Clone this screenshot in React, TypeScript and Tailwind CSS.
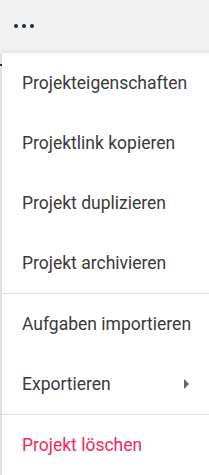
const groups: { label: string; danger?: boolean; sub?: boolean }[][] = [
  [
    { label: 'Projekteigenschaften' },
    { label: 'Projektlink kopieren' },
    { label: 'Projekt duplizieren' },
    { label: 'Projekt archivieren' },
  ],
  [{ label: 'Aufgaben importieren' }, { label: 'Exportieren', sub: true }],
  [{ label: 'Projekt löschen', danger: true }],
];

export default function App() {
  return (
    <div className="w-[209px] h-[475px] overflow-hidden bg-[#f2f2f2] relative font-['Roboto',sans-serif]">
      {/* top bar */}
      <div className="h-[53px] flex items-center pl-[14px] gap-[4px] pb-[1px]">
        <span className="w-[4px] h-[4px] rounded-full bg-[#1c2c3c]" />
        <span className="w-[4px] h-[4px] rounded-full bg-[#1c2c3c]" />
        <span className="w-[4px] h-[4px] rounded-full bg-[#1c2c3c]" />
      </div>
      <div className="absolute left-0 top-[64px] w-[3px] h-[2px] bg-[#2a3a4a]" />

      {/* menu */}
      <div className="absolute left-[2px] top-[53px] w-[240px] bg-white shadow-[0_1px_5px_rgba(0,0,0,0.22)]">
        {groups.map((g, gi) => (
          <div key={gi} className={gi > 0 ? 'border-t border-[#dedede]' : ''}>
            {g.map((it) => (
              <div
                key={it.label}
                className={`h-[60px] flex items-center pl-[20px] pr-[35px] text-[17.5px] ${
                  it.danger ? 'text-[#f2295b]' : 'text-[#3a3a3a]'
                }`}
              >
                <span className="w-[162px] shrink-0 whitespace-nowrap">{it.label}</span>
                {it.sub && (
                  <svg width="6" height="10" viewBox="0 0 6 10">
                    <path d="M0 0 L5 5 L0 10 Z" fill="#666" />
                  </svg>
                )}
              </div>
            ))}
          </div>
        ))}
      </div>
    </div>
  );
}
